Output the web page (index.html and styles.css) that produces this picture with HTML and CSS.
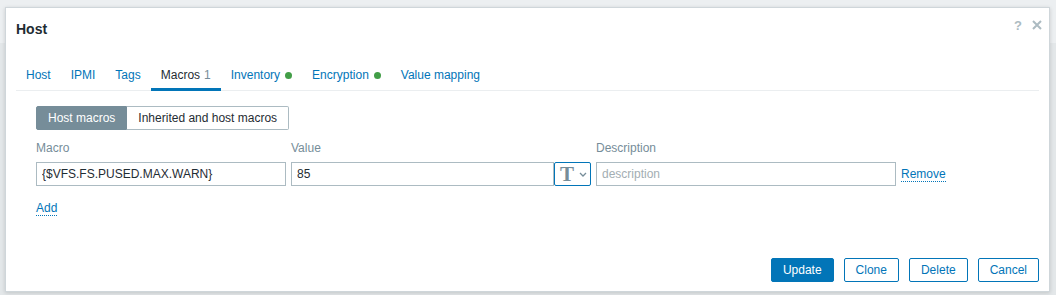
FILE: index.html
```html
<!DOCTYPE html>
<html lang="en">
<head>
  <meta charset="UTF-8" />
  <meta name="viewport" content="width=device-width, initial-scale=1.0"/>
  <title>Host</title>
  <link rel="stylesheet" href="styles.css">
</head>
<body>
  <div class="dialog">
    <div class="dialog-head">
      <h4 class="dialog-title">Host</h4>
      <div class="dialog-controls">
        <button type="button" class="btn-icon btn-help">?</button>
        <button type="button" class="btn-icon btn-close">
          <svg width="10" height="10" viewBox="0 0 10 10"><path d="M1 1L9 9M9 1L1 9" stroke="#acbbc2" stroke-width="2"/></svg>
        </button>
      </div>
    </div>

    <div class="dialog-body">
      <ul class="tabs">
        <li><a href="#">Host</a></li>
        <li><a href="#">IPMI</a></li>
        <li><a href="#">Tags</a></li>
        <li class="active"><a href="#">Macros<span class="tab-count">1</span></a></li>
        <li><a href="#">Inventory<span class="dot"></span></a></li>
        <li><a href="#">Encryption<span class="dot"></span></a></li>
        <li><a href="#">Value mapping</a></li>
      </ul>

      <div class="tab-panel">
        <div class="segmented">
          <label class="seg-item selected">Host macros</label>
          <label class="seg-item">Inherited and host macros</label>
        </div>

        <div class="macro-grid">
          <div class="col-label">Macro</div>
          <div class="col-label">Value</div>
          <div class="col-label">Description</div>
          <div></div>

          <input class="field" type="text" value="{$VFS.FS.PUSED.MAX.WARN}">
          <div class="value-field">
            <input class="field" type="text" value="85">
            <button type="button" class="btn-type">
              <span class="type-t">T</span>
              <svg width="8" height="5" viewBox="0 0 8 5"><path d="M1 1l3 3 3-3" fill="none" stroke="#768d99" stroke-width="1.3"/></svg>
            </button>
          </div>
          <input class="field" type="text" placeholder="description">
          <a href="#" class="link-action remove">Remove</a>
        </div>

        <a href="#" class="link-action add">Add</a>
      </div>
    </div>

    <div class="dialog-foot">
      <button type="button" class="btn btn-primary">Update</button>
      <button type="button" class="btn">Clone</button>
      <button type="button" class="btn">Delete</button>
      <button type="button" class="btn">Cancel</button>
    </div>
  </div>
</body>
</html>
```

FILE: styles.css
```css
body {
  margin: 0;
  height: 295px;
  overflow: hidden;
  font-family: "Liberation Sans", Arial, sans-serif;
  font-size: 12px;
  color: #1f2c33;
  background: linear-gradient(#eceff1 43px, #e3e7e9 43px);
  padding: 7px 0 0 5px;
  box-sizing: border-box;
}

.dialog {
  width: 1045px;
  height: 285px;
  box-sizing: border-box;
  background-color: #fff;
  border: 1px solid #cfd6da;
  box-shadow: 0 1px 4px rgba(0, 0, 0, 0.15);
  display: flex;
  flex-direction: column;
}

.dialog-head {
  display: flex;
  padding: 12px 10px 0;
}

.dialog-title {
  flex: 1;
  margin: 0;
  font-size: 14px;
  line-height: 18px;
  font-weight: bold;
}

.dialog-controls {
  display: flex;
  gap: 10px;
  margin: -4px -3px 0 0;
}

.btn-icon {
  border: none;
  background: none;
  padding: 0;
  height: 18px;
  cursor: pointer;
  font-family: inherit;
}

.btn-help {
  font-size: 13px;
  font-weight: bold;
  color: #acbbc2;
}

.dialog-body {
  padding: 28px 10px 0;
}

.tabs {
  list-style: none;
  margin: 0;
  padding: 0;
  display: flex;
  border-bottom: 1px solid #ebeef0;
}

.tabs a {
  display: block;
  padding: 0 10px 4px;
  line-height: 18px;
  color: #0275b8;
  text-decoration: none;
  border-bottom: 3px solid transparent;
  margin-bottom: -1px;
}

.tabs .active a {
  color: #1f2c33;
  border-bottom-color: #0275b8;
}

.tab-count {
  color: #768d99;
  margin-left: 4px;
}

.dot {
  display: inline-block;
  width: 7px;
  height: 7px;
  border-radius: 50%;
  background-color: #429e47;
  margin-left: 5px;
  vertical-align: 0;
}

.tab-panel {
  padding: 15px 20px 0;
}

.segmented {
  display: flex;
}

.seg-item {
  height: 24px;
  box-sizing: border-box;
  line-height: 22px;
  padding: 0 11px;
  border: 1px solid #acbbc2;
  cursor: pointer;
}

.seg-item.selected {
  background-color: #768d99;
  border-color: #768d99;
  color: #fff;
  border-radius: 2px 0 0 2px;
}

.seg-item + .seg-item {
  border-left: none;
  border-radius: 0 2px 2px 0;
}

.macro-grid {
  display: grid;
  grid-template-columns: 250px 300px 300px auto;
  column-gap: 5px;
  row-gap: 5px;
  align-items: center;
  margin-top: 9px;
}

.col-label {
  color: #768d99;
  line-height: 18px;
}

.field {
  height: 24px;
  box-sizing: border-box;
  width: 100%;
  border: 1px solid #acbbc2;
  padding: 0 5px;
  margin: 0;
  font-family: inherit;
  font-size: 12px;
  color: #1f2c33;
  outline: none;
}

.field::placeholder {
  color: #a3aeb3;
}

.value-field {
  display: flex;
}

.btn-type {
  flex: 0 0 37px;
  height: 24px;
  box-sizing: border-box;
  border: 1px solid #0275b8;
  border-radius: 2px;
  background-color: #fff;
  padding: 0 0 0 5px;
  display: flex;
  align-items: center;
  gap: 5px;
}

.type-t {
  font-family: "Liberation Serif", "Times New Roman", serif;
  font-weight: bold;
  font-size: 21px;
  line-height: 20px;
  color: #768d99;
}

.link-action {
  color: #0275b8;
  text-decoration: none;
  border-bottom: 1px dotted #0275b8;
  justify-self: start;
}

.add {
  display: inline-block;
  margin-top: 15px;
  line-height: 14px;
}

.dialog-foot {
  margin-top: auto;
  display: flex;
  justify-content: flex-end;
  gap: 10px;
  padding: 0 10px 9px;
}

.btn {
  height: 24px;
  padding: 0 11px;
  border: 1px solid #0275b8;
  border-radius: 2px;
  background-color: #fff;
  color: #0275b8;
  font-family: inherit;
  font-size: 12px;
  cursor: pointer;
}

.btn-primary {
  background-color: #0275b8;
  color: #fff;
}
```
